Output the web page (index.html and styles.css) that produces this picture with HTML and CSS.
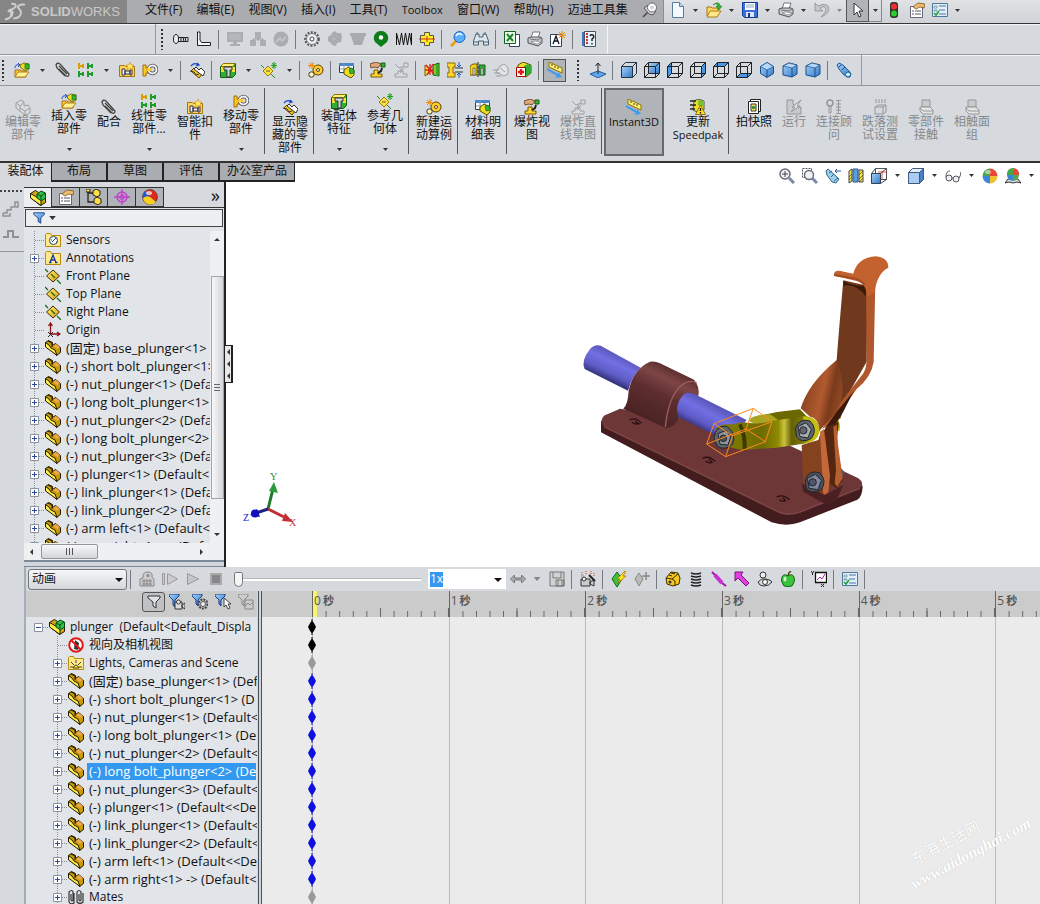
FILE: index.html
```html
<!DOCTYPE html>
<html lang="zh-CN">
<head>
    <meta charset="utf-8">
    <title>SolidWorks</title>
    <link rel="stylesheet" href="styles.css">
</head>
<body>
    <!-- icon sprite -->
    <svg class="sprite" aria-hidden="true">
        <defs>
            <linearGradient id="blue" x1="0" y1="0" x2="1" y2="1"><stop offset="0" stop-color="#a8d2f8"/><stop offset="1" stop-color="#2d78c8"/></linearGradient>
            <linearGradient id="gold" x1="0" y1="0" x2="1" y2="1"><stop offset="0" stop-color="#fff36a"/><stop offset="1" stop-color="#e09a10"/></linearGradient>
        </defs>
        <symbol id="caret" viewBox="0 0 5 3"><path d="M0 0h5L2.500 3z" fill="#333"/></symbol>
        <symbol id="new" viewBox="0 0 16 16"><path d="M2.500.5h7l4 4v11h-11z" fill="#f4f9ff" stroke="#5b7b9c"/><path d="M9.500.5v4h4" fill="#bcd3ea" stroke="#5b7b9c"/></symbol>
        <symbol id="open" viewBox="0 0 16 16"><path d="M1 14V5h4l1 1h6v3" fill="#ffd95e" stroke="#a8720a"/><path d="M1 15l3-6h11l-4 6z" fill="#ffe98c" stroke="#b07c10"/><path d="M7 3q4-3 5 1h-2l3 4 3-4h-2q-1-6-7-1z" fill="#2cb52c" stroke="#177017" stroke-width=".5"/></symbol>
        <symbol id="save" viewBox="0 0 16 16"><path d="M.5 .5h15v15h-13l-2-2z" fill="#3b6fe0" stroke="#153a96"/><path d="M3 1h10v7H3z" fill="#fff"/><path d="M4 3h8M4 5h8" stroke="#8fa5c8"/><path d="M4 10h8v5H4z" fill="#dfe6f2"/><path d="M6 11h2v4H6z" fill="#153a96"/></symbol>
        <symbol id="print" viewBox="0 0 16 16"><path d="M4 7l2-6h7l-2 6" fill="#fff" stroke="#678"/><path d="M1 7l3-1h9l2 1v5l-4 3-10-3z" fill="#c3c8d0" stroke="#555"/><path d="M4 11l6 2 4-2-6-1z" fill="#fff" stroke="#777" stroke-width=".6"/><path d="M3 8l8 1 3-2" stroke="#777" fill="none"/></symbol>
        <symbol id="undo" viewBox="0 0 16 16"><path d="M1 1v8h8L6 6q5-3 6 1 0 4-5 8 8-3 8-9-2-6-11-2z" fill="#c4c6c9" stroke="#8d8f92" stroke-width=".8"/></symbol>
        <symbol id="cursor" viewBox="0 0 16 16"><path d="M4 1v12l3-3 2 5 2-1-2-5h4z" fill="#fff" stroke="#333"/></symbol>
        <symbol id="traffic" viewBox="0 0 16 16"><rect x="4" y="0" width="8" height="16" rx="3" fill="#333"/><circle cx="8" cy="4.500" r="3" fill="#f03030"/><circle cx="8" cy="11.500" r="3" fill="#28d028"/></symbol>
        <symbol id="props" viewBox="0 0 16 16"><path d="M1.500 4.500h12v11h-12z" fill="#fff" stroke="#667"/><path d="M3 9h2M3 12h2M6 9h6M6 12h6" stroke="#556"/><path d="M4 5l5-4 7 1-1 4-4-1-4 2z" fill="#eebc72" stroke="#7e5418" stroke-width=".8"/></symbol>
        <symbol id="options" viewBox="0 0 16 16"><path d="M.5 1.500h15v13H.5z" fill="#e3f0fa" stroke="#4d7897"/><path d="M2 4h3v2H2zM2 8h3v1H2z" fill="#fff" stroke="#57809c" stroke-width=".7"/><path d="M7 4h7M7 8h6M7 12h7" stroke="#4477aa"/><path d="M2 11l2 2 3-4" fill="none" stroke="#1a9a30" stroke-width="1.500"/></symbol>
        <symbol id="pin" viewBox="0 0 16 16"><path d="M1 15l5-5" stroke="#444" stroke-width="1.500"/><path d="M2 6l4-3 8 6-3 4-4-1z" fill="#d4d6d8" stroke="#555"/><circle cx="10" cy="5.500" r="4.500" fill="#fff" stroke="#666"/><circle cx="10" cy="5.500" r="2" fill="#cfd2d5"/></symbol>
        <symbol id="bolt" viewBox="0 0 16 16"><ellipse cx="3" cy="8" rx="2.500" ry="4.500" fill="#eee" stroke="#222"/><path d="M5 6.500h10v4H5M8 6.500v4M10 6l1 5M12 6l1 5" fill="none" stroke="#222"/></symbol>
        <symbol id="angle" viewBox="0 0 16 16"><path d="M1.500 1v13.500h13v-3h-9L4 9V1z" fill="#f6f6f6" stroke="#222"/></symbol>
        <symbol id="monitor" viewBox="0 0 16 16"><path d="M0 1h16v10H0zM6 11h4v2h3v2H3v-2h3z" fill="#aaadb1"/><path d="M2 3h12v6H2z" fill="#b3b6ba"/></symbol>
        <symbol id="blocks" viewBox="0 0 16 16"><path d="M5 1h6v6H5zM0 9h6v6H0zM10 9h6v6h-6z" fill="#abaeb2"/><path d="M8 7v3M3 10V8h10v2" stroke="#999" fill="none"/></symbol>
        <symbol id="disc" viewBox="0 0 16 16"><circle cx="8" cy="8" r="7.500" fill="#a9acb0"/><path d="M3 11l4-4 2 3 4-4" stroke="#c0c3c7" stroke-width="2" fill="none"/></symbol>
        <symbol id="gear" viewBox="0 0 16 16"><circle cx="8" cy="8" r="6.800" fill="#eee" stroke="#555" stroke-width="2" stroke-dasharray="2 1.400"/><circle cx="8" cy="8" r="5.500" fill="#eceef0" stroke="#777"/><circle cx="8" cy="8" r="2" fill="#fff" stroke="#444"/></symbol>
        <symbol id="geargray" viewBox="0 0 16 16"><path d="M5 2l3-2 2 2 4 0 1 4-1 5-4 1-1 3-4-1-1-2-3-2 0-4 3-2z" fill="#a9acb0"/><circle cx="7" cy="8" r="1.500" fill="#b8bbbf"/></symbol>
        <symbol id="cup" viewBox="0 0 16 16"><path d="M0 2h16v3h-1l-3 9H4L1 5H0z" fill="#a7aaae"/></symbol>
        <symbol id="drop" viewBox="0 0 16 16"><path d="M8 16L2 11Q0 8 1 5 3 0 8 0t7 5q1 3-1 6z" fill="#0d7d1a"/><circle cx="8" cy="6.500" r="2.200" fill="#fff"/></symbol>
        <symbol id="spring" viewBox="0 0 16 16"><path d="M.5 14V2l3 12 2-12 2 12 2-12 2 12 2-12 2 12V2" fill="none" stroke="#111"/></symbol>
        <symbol id="cross" viewBox="0 0 16 16"><path d="M5.500 1.500h5v3h4v7h-4v3h-5v-3h-4v-7h4z" fill="#ffee20" stroke="#555"/><path d="M0 8h16M8 5v6" stroke="#d03020"/></symbol>
        <symbol id="magnify" viewBox="0 0 16 16"><path d="M1 15l5-5" stroke="#e8a020" stroke-width="3"/><circle cx="9.500" cy="6" r="5.500" fill="#5db0ff" stroke="#2462b8"/><path d="M6 5q2-4 6-1" stroke="#fff" fill="none" stroke-width="1.500"/></symbol>
        <symbol id="binoc" viewBox="0 0 16 16"><path d="M3 3h3v3h4V3h3l2.500 7v4h-5v-4h-5v4h-5v-4z" fill="#dce6ef" stroke="#4c6070"/><path d="M4 1v3M12 1v3M1 11h4M11 11h4" stroke="#4c6070"/></symbol>
        <symbol id="excel" viewBox="0 0 16 16"><path d="M5.500 3.500h10v12h-10z" fill="#fff" stroke="#345"/><path d="M.5.500h11v12H.5z" fill="#e7f7e7" stroke="#17611f"/><path d="M3 3l6 7M9 3l-6 7" stroke="#17802a" stroke-width="2"/></symbol>
        <symbol id="astar" viewBox="0 0 16 16"><path d="M.5 3.500h11v12H.5z" fill="#fff" stroke="#345"/><path d="M3 13l3-8 3 8M4 10h4" stroke="#112" fill="none" stroke-width="1.300"/><path d="M12 0v8M8 4h8M9 1l6 6M15 1L9 7" stroke="#e88a10"/></symbol>
        <symbol id="help" viewBox="0 0 16 16"><path d="M1 1h3v14H1z" fill="#3a78c0"/><path d="M3.500 .5h11v15h-11z" fill="#e8f2fa" stroke="#456"/><path d="M5 3h2M5 6h2M5 9h2M5 12h2" stroke="#d03030" stroke-width="2"/><path d="M9 5q1-2 3-1 2 2-1 4v2M11 12v1.500" stroke="#222" fill="none" stroke-width="1.500"/></symbol>
        <symbol id="insert" viewBox="0 0 16 16"><path d="M1 15V8h5l1 1h5v6z" fill="#ffc93c" stroke="#a87010"/><path d="M1 15l3-5h11l-4 5z" fill="#fff09a" stroke="#b88410"/><path d="M6 3l4-2 5 1v5l-3 2-5-3z" fill="#f0dc20" stroke="#6a6000" stroke-width=".8"/><path d="M11 2h4v5h-4z" fill="#2fba2f" stroke="#145c14" stroke-width=".6"/><path d="M1 6q0-4 4-3M4 1l2 2-2 2" fill="none" stroke="#1a48c8"/></symbol>
        <symbol id="clip" viewBox="0 0 16 16"><path d="M4 7l7 7q3 1 3-2L5 2Q2 0 1 3l1 3 8 8M4 4l8 8" fill="none" stroke="#444" stroke-width="1.300"/></symbol>
        <symbol id="pattern" viewBox="0 0 16 16"><path d="M1 1v6M1 4h4M5 2v4" stroke="#d8a000" stroke-width="2"/><path d="M10 1v6M10 4h4M14 2v4M1 9v6M1 12h4M5 10v4M10 9v6M10 12h4M14 10v4" stroke="#1c9c28" stroke-width="2"/></symbol>
        <symbol id="smart" viewBox="0 0 16 16"><path d="M.5 3.500h5l1 1h9v10H.5z" fill="#ffd75a" stroke="#a87410"/><path d="M3 7h3v6H3zM6 9h5v3H6zM11 8h2v5h-2z" fill="#eef" stroke="#334"/><path d="M11 0l1 3h3l-2 2 1 3-3-2-3 2 1-3-2-2h3z" fill="#fff06a" stroke="#d88a10" stroke-width=".6"/></symbol>
        <symbol id="move" viewBox="0 0 16 16"><path d="M1 3h3v3h3v5H4v3H1z" fill="#ffc928" stroke="#a46a00"/><circle cx="10.500" cy="7.500" r="4" fill="none" stroke="#444" stroke-width="3.500"/><circle cx="10.500" cy="7.500" r="4" fill="none" stroke="#f4f4fa" stroke-width="2"/><path d="M5 7.500h5" stroke="#ffc928" stroke-width="3"/></symbol>
        <symbol id="showhide" viewBox="0 0 16 16"><path d="M2 9l3-3 8 6-3 4z" fill="#f4c520" stroke="#5a4400"/><path d="M5 7l2-2 3 3 2-2 4 4-2 4z" fill="#fff" stroke="#333"/><path d="M1 9l4 1 2 3 3-1" fill="#f4c520" stroke="#333"/><path d="M2 4q3-4 7-1M8 1l2 2-3 1" fill="none" stroke="#1a48c8" stroke-width="1.300"/></symbol>
        <symbol id="feature" viewBox="0 0 16 16"><path d="M.5 4.500l3-3h12v11l-3 3H.5z" fill="#2dae34" stroke="#165c1a"/><path d="M.5 4.500l3-3h12l-3 3z" fill="#fff07a" stroke="#8a7400"/><path d="M1 5h3v5H1zM12 5h3v5h-3z" fill="#f4e030"/><path d="M4 5h8v3h-2v7H7V8H4z" fill="#d5d8da" stroke="#333"/></symbol>
        <symbol id="refgeo" viewBox="0 0 16 16"><path d="M2 9l5-5 5 5-5 5z" fill="#ffe23c" stroke="#9a7a00"/><path d="M0 3l3 3M10 12l4 4" stroke="#1a8a1a"/><path d="M13 0v7M10 3.500h6M11 1l4 5M15 1l-4 5" stroke="#1fa01f"/><path d="M5 9h4" stroke="#554"/></symbol>
        <symbol id="motion" viewBox="0 0 16 16"><circle cx="10" cy="8" r="5" fill="#ffcc30" stroke="#5a4000"/><circle cx="10" cy="8" r="1.500" fill="#fff" stroke="#5a4000"/><circle cx="3.500" cy="12.500" r="2.700" fill="#fff6b0" stroke="#333"/><path d="M4 0v7M0 3.500h8M1 1l5 5M6 1L1 6" stroke="#f08a10"/></symbol>
        <symbol id="bom" viewBox="0 0 16 16"><path d="M.5 1.500h14v9H.5z" fill="#fff" stroke="#245"/><path d="M0 1h15v3H0z" fill="#4a86cc"/><path d="M5 1v9M10 4v3M1 7h13" stroke="#89a"/><path d="M5 8l4-3 6 3v5l-3 3-7-4z" fill="#f4dc20" stroke="#5c5000"/><path d="M10 7l3-1 2 2v3l-4 1z" fill="#2db52d" stroke="#145c14" stroke-width=".6"/></symbol>
        <symbol id="explode" viewBox="0 0 16 16"><path d="M1 12h3V8h4v4h4v3H1z" fill="#ffd630" stroke="#7a5800"/><path d="M11 1h4v4h-4z" fill="#2db52d" stroke="#145c14"/><path d="M12 6l-1 3-3 2" stroke="#222" fill="none" stroke-width="2"/><path d="M0 2l6-2 5 2-3 4-3-1-4 1z" fill="#e0a878" stroke="#5a3414" stroke-width=".8"/></symbol>
        <symbol id="explodeline" viewBox="0 0 16 16"><path d="M2 12h3V9h5v3h4v3H2z" fill="#ddd" stroke="#666"/><path d="M11 1h4v4h-4zM2 2l4 4 5-2M9 5l-2 5M11 6l-4 5" fill="#ddd" stroke="#666"/></symbol>
        <symbol id="clash" viewBox="0 0 16 16"><path d="M1 3l4 3v5l-4 3z" fill="#ffdc20" stroke="#7a6000"/><path d="M9 3l6-2v13l-6-1z" fill="#8fc820" stroke="#145c14"/><path d="M13 2v12" stroke="#2fae35" stroke-width="2"/><path d="M2 3l8 9M9 2L3 13M1 8h9M6 2v11" stroke="#e02020" stroke-width="1.300"/></symbol>
        <symbol id="clear" viewBox="0 0 16 16"><path d="M0 1h8v4H6v6h2v4H0v-4h2V5H0z" fill="#ffd630" stroke="#8a6400"/><path d="M8 6h8M8 10h8" stroke="#333"/><path d="M12 0v5M12 16v-5M10 3l2 2 2-2M10 13l2-2 2 2" stroke="#1a5ad8" fill="none"/></symbol>
        <symbol id="align" viewBox="0 0 16 16"><path d="M0 4l3-2h4v11H0z" fill="#f5d520" stroke="#6c5400"/><path d="M9 3h6v10H9z" fill="#2fae35" stroke="#145c14"/><path d="M3 6h2v7H3zM11 6h2v7h-2z" fill="#e8e8e8" stroke="#333" stroke-width=".6"/><path d="M8 0v16" stroke="#222" stroke-dasharray="3 1"/></symbol>
        <symbol id="dim" viewBox="0 0 16 16"><path d="M7 4l4-2 4 4v6l-4 2-8-4z" fill="#eee" stroke="#666"/><path d="M0 8h6M1 11h6M3 14h5M7 6l5 4" stroke="#666"/></symbol>
        <symbol id="medic" viewBox="0 0 16 16"><path d="M2 3l5-3 8 3v8l-5 4-8-4z" fill="#f0dc28" stroke="#5a5000"/><path d="M8 4l4-2 3 2v7l-5 3z" fill="#2fae35"/><path d="M.5 5.500h9v9h-9z" fill="#fff" stroke="#a00"/><path d="M5 7v6M2 10h6" stroke="#e01818" stroke-width="2.400"/></symbol>
        <symbol id="instant" viewBox="0 0 16 16"><path d="M2 0l13 6v5L2 5z" fill="#ffee78" stroke="#8a7400"/><path d="M5 2v2M8 4v2M11 5v2" stroke="#554400"/><path d="M0 6l11 6v-2l4 5-7 1 2-2L0 8z" fill="#3c9cf0"/></symbol>
        <symbol id="normal" viewBox="0 0 16 16"><path d="M0 12l8-3 8 3-8 4z" fill="#5fa8ec" stroke="#235c9c"/><path d="M8 12V1M5.500 4L8 1l2.500 3" stroke="#222" fill="none"/></symbol>
        <symbol id="cube" viewBox="0 0 16 16"><path d="M.5 4.500h11v11H.5zM4.500.5h11v11h-11zM.5 4.500l4-4M11.500 4.500l4-4M11.500 15.500l4-4M.5 15.500l4-4" fill="none" stroke="#222"/></symbol>
        <symbol id="cube-front" viewBox="0 0 16 16"><path d="M.5 4.500h11v11H.5z" fill="url(#blue)"/><path d="M.5 4.500h11v11H.5zM.5 4.500l4-4h11v11l-4 4M11.500 4.500l4-4" fill="none" stroke="#234"/></symbol>
        <symbol id="cube-back" viewBox="0 0 16 16"><path d="M4.500.5h11v11h-11z" fill="url(#blue)"/><use href="#cube"/></symbol>
        <symbol id="cube-left" viewBox="0 0 16 16"><path d="M.5 4.500l4-4v11l-4 4z" fill="#4898e4"/><use href="#cube"/></symbol>
        <symbol id="cube-right" viewBox="0 0 16 16"><path d="M11.500 4.500l4-4v11l-4 4z" fill="#4898e4"/><use href="#cube"/></symbol>
        <symbol id="cube-top" viewBox="0 0 16 16"><path d="M.5 4.500l4-4h11l-4 4z" fill="#4898e4"/><use href="#cube"/></symbol>
        <symbol id="cube-bottom" viewBox="0 0 16 16"><path d="M.5 15.500l4-4h11l-4 4z" fill="#4898e4"/><use href="#cube"/></symbol>
        <symbol id="iso" viewBox="0 0 16 16"><path d="M8 .5l6.500 4v7L8 15.500l-6.500-4v-7z" fill="url(#blue)" stroke="#1d4f88"/><path d="M1.500 4.500L8 8l6.500-3.500L8 .5z" fill="#b4d8fa" stroke="#1d4f88" stroke-width=".7"/><path d="M8 8v7" stroke="#1d4f88"/></symbol>
        <symbol id="dimetric" viewBox="0 0 16 16"><path d="M1 4l6-3 8 2v9l-5 3-9-2z" fill="url(#blue)" stroke="#1d4f88"/><path d="M1 4l9 2 5-3-8-2z" fill="#b4d8fa" stroke="#1d4f88" stroke-width=".7"/><path d="M10 6v9" stroke="#1d4f88"/></symbol>
        <symbol id="torch" viewBox="0 0 16 16"><path d="M1 3l2-2 4 2 6 6 2 3-1 3-3 0-4-3-4-5z" fill="url(#blue)" stroke="#1c5b94"/><path d="M3 5l2-2M6 8l3-3" stroke="#184d80"/><circle cx="12" cy="12.500" r="2.500" fill="#c9f0ff" stroke="#1c5b94"/></symbol>
        <symbol id="component" viewBox="0 0 16 16"><path d="M1 4l5-3 3 2v4l4-1 2 3v5l-5 2L1 9z" fill="#ddd" stroke="#666"/><path d="M1 4l4 3v4M5 7l4-4M5 9l5 3 5-3M10 12v4" stroke="#666" fill="none"/></symbol>
        <symbol id="speedpak" viewBox="0 0 16 16"><path d="M4 2l4-2 6 2v9l-5 3-6-3z" fill="#f0dc28" stroke="#554"/><path d="M8 1l6 1v6l-6-2z" fill="#7cc030"/><path d="M0 2h6M0 6h6M0 10h5" stroke="#222" stroke-width="1.300"/><path d="M10.500 6l5 9.500h-10z" fill="#ffe02a" stroke="#7a5a00" stroke-width=".8"/><path d="M10.500 9v3M10.500 13v1.500" stroke="#111" stroke-width="1.300"/></symbol>
        <symbol id="snapshot" viewBox="0 0 16 16"><path d="M4.500.5h10v12h-10z" fill="#fff" stroke="#222"/><path d="M2.500 2.500h10v12h-10z" fill="#fff" stroke="#222"/><path d="M5 5h5v7H5z" fill="#ffe860" stroke="#333"/><circle cx="7.500" cy="8.500" r="1.800" fill="#3a8a3a"/></symbol>
        <symbol id="run" viewBox="0 0 16 16"><path d="M1 1h6v4l3 3h5v7H1z" fill="#bbb" stroke="#555"/><path d="M15 1L6 8l3 0-4 5 9-6-3 0z" fill="#eee" stroke="#555"/></symbol>
        <symbol id="connect" viewBox="0 0 16 16"><circle cx="4" cy="4" r="3" fill="none" stroke="#555" stroke-width="1.500"/><path d="M3 7v7h2V7M10 1.500h5M10 14.500h5M10 5h5M10 8h5M10 11h5M12.500 1v14" stroke="#555" fill="none"/></symbol>
        <symbol id="droptest" viewBox="0 0 16 16"><path d="M3 8l3-2h8v7l-3 2H3zM3 8h8v7M11 8l3-2M4 0v4M7 0v4M10 0v4M13 0v4" fill="none" stroke="#555"/></symbol>
        <symbol id="contact" viewBox="0 0 16 16"><path d="M4 1h8v7H4z" fill="#bbb" stroke="#555"/><path d="M2 8h10l3 3v4H5l-3-3z" fill="#eee" stroke="#555"/><path d="M2 9l3 3h10" fill="none" stroke="#555"/></symbol>
        <symbol id="zoomfit" viewBox="0 0 16 16"><circle cx="6" cy="6" r="5" fill="#eef2f5" stroke="#667" stroke-width="1.400"/><path d="M6 3v6M3 6h6" stroke="#445"/><path d="M10 10l5 5" stroke="#7a88a8" stroke-width="3"/></symbol>
        <symbol id="zoomarea" viewBox="0 0 16 16"><path d="M.5.500h9v9h-9z" fill="none" stroke="#556" stroke-dasharray="2 1"/><circle cx="7" cy="7" r="4.500" fill="#eef2f5" stroke="#667" stroke-width="1.400"/><path d="M10 10l5 5" stroke="#7a88a8" stroke-width="3"/></symbol>
        <symbol id="prevview" viewBox="0 0 16 16"><path d="M1 3l2-2 9 8 2 2-3 4-4-1-5-7z" fill="#9cd0ee" stroke="#35648a"/><path d="M4 5l3-2M6 9l3-3M9 13l4-3" stroke="#35648a"/><path d="M16 3H10M12 1l-2 2 2 2" stroke="#235a9a" fill="none"/></symbol>
        <symbol id="section" viewBox="0 0 16 16"><path d="M1 3l3-2v12l-3 2zM11 2h4v12h-4z" fill="#ffe63a" stroke="#444"/><path d="M5 1h5v13H5z" fill="#5a9ee0" stroke="#285a92"/><path d="M1 9l3-3M1 12l3-3M11 7l4-4M11 11l4-4M11 14l4-4" stroke="#444" stroke-width=".7"/></symbol>
        <symbol id="orient" viewBox="0 0 16 16"><path d="M4.500.5h11v11h-11z" fill="#fff" stroke="#555"/><path d="M.5 5.500h9v10h-9z" fill="url(#blue)" stroke="#345"/><path d="M.5 5.500l4-5M9.500 5.500l6-5M9.500 15.500l6-4" stroke="#345"/><path d="M11 3v8M7 4h9" stroke="#c33" stroke-width=".8"/></symbol>
        <symbol id="style" viewBox="0 0 16 16"><path d="M.5 4.500l4-4h11v11l-4 4H.5z" fill="#dfeeff" stroke="#445a7a"/><path d="M11.500 4.500l4-4v11l-4 4z" fill="#4c80cc" stroke="#445a7a"/><path d="M.5 4.500h11v11H.5z" fill="#a9cdf2" stroke="#445a7a"/></symbol>
        <symbol id="glasses" viewBox="0 0 16 16"><circle cx="4" cy="10" r="3" fill="#eef" stroke="#555"/><circle cx="11" cy="11" r="3" fill="#eef" stroke="#555"/><path d="M1 9q0-6 4-6M7 10h1M14 10q3-5 1-6" stroke="#555" fill="none"/></symbol>
        <symbol id="ball" viewBox="0 0 16 16"><path d="M8 8V.5A7.500 7.500 0 0 0 .5 8z" fill="#48a848"/><path d="M8 8h7.500A7.500 7.500 0 0 0 8 .5z" fill="#e84838"/><path d="M8 8H.5A7.500 7.500 0 0 0 8 15.500z" fill="#3c86d8"/><path d="M8 8v7.500A7.500 7.500 0 0 0 15.500 8z" fill="#f0c030"/><ellipse cx="6" cy="4" rx="3" ry="2" fill="#fff" opacity=".5"/></symbol>
        <symbol id="scene" viewBox="0 0 16 16"><path d="M0 15l3-4h10l3 4-4-1-4 1-4-1z" fill="#ddd" stroke="#333"/><path d="M8 7V0a6 6 0 0 0-6 7z" fill="#48a848"/><path d="M8 7h6A6 6 0 0 0 8 0z" fill="#e84838"/><path d="M8 7H2a6 6 0 0 0 6 6z" fill="#3c86d8"/><path d="M8 7v6a6 6 0 0 0 6-6z" fill="#50a850"/></symbol>
        <symbol id="ball2" viewBox="0 0 16 16"><circle cx="8" cy="8" r="7.500" fill="#e02818" stroke="#333" stroke-width=".6"/><path d="M3 2q2 1 5 6l6 5A7.500 7.500 0 0 1 8 15.500Q4 11 1 10 0 5 3 2z" fill="#2858c8"/><path d="M1 9q4-3 7-1l6 5A7.500 7.500 0 0 1 1 9z" fill="#f8d020"/><ellipse cx="7" cy="4" rx="3" ry="2" fill="#fff" opacity=".7"/></symbol>
        <symbol id="config" viewBox="0 0 16 16"><path d="M2 1v12h6M2 4h6" stroke="#222" fill="none" stroke-width="1.300"/><path d="M7 2l3-2 4 2v4l-3 2-4-2zM8 10l3-2 4 2v4l-3 2-4-2zM0 0h4v3H0z" fill="#ffe040" stroke="#222"/></symbol>
        <symbol id="target" viewBox="0 0 16 16"><circle cx="8" cy="8" r="5" fill="none" stroke="#c040d0" stroke-width="1.500"/><path d="M8 0v16M0 8h16" stroke="#c040d0" stroke-width="1.300"/><path d="M6 6h4v4H6z" fill="none" stroke="#c040d0"/></symbol>
        <symbol id="funnel" viewBox="0 0 16 16"><path d="M2 2h12v2l-4 4v6l-3-2V8L2 4z" fill="url(#blue)" stroke="#173f8c"/></symbol>
        <symbol id="part" viewBox="0 0 16 16"><path d="M.5 2.500l3-2 4 2v3l3-2 5 4v5l-4 3z" fill="#c99a08" stroke="#221a00"/><path d="M.5 2.500L4 5l2 3 4 2 2 5.500L.5 7z" fill="#ffec4a" stroke="#221a00"/><path d="M8 6l3-2 4 3-3 2z" fill="#f0a848"/><path d="M3 1l4 2v4" fill="none" stroke="#221a00"/></symbol>
        <symbol id="asm" viewBox="0 0 16 16"><path d="M.5 3.500l5-3 3 2 7 2v8l-5 3-10-8z" fill="#d2a810" stroke="#221a00"/><path d="M.5 3.500L5 6l6 4v5.500L.5 8z" fill="#ffec4a" stroke="#221a00"/><path d="M7 4l4-3 4.500 2v5l-4 3L7 8z" fill="#32c04a" stroke="#0b4a16"/><path d="M7 4l4 2v4M11 6l4-3" stroke="#0b4a16" fill="none"/></symbol>
        <symbol id="folder" viewBox="0 0 16 16"><path d="M.5 2.500l1-1h4l1 2h9v11H.5z" fill="#ffe98a" stroke="#b88a10"/></symbol>
        <symbol id="sensors" viewBox="0 0 16 16"><use href="#folder"/><circle cx="8.500" cy="8.500" r="4" fill="#fff" stroke="#246"/><path d="M7 10l4-4M6 8l1 0M11 10l1 0" stroke="#246"/></symbol>
        <symbol id="notes" viewBox="0 0 16 16"><use href="#folder"/><path d="M5 12.500L8 5l3 7.500M6 10h4M4 12.500h2.500M10 12.500h2.500" stroke="#1838a8" fill="none" stroke-width="1.300"/></symbol>
        <symbol id="lights" viewBox="0 0 16 16"><use href="#folder"/><path d="M5 13q3-6 6 0zM8 5v3M3 7l3 3M13 7l-3 3M2 12h3M11 12h3" fill="#ffe020" stroke="#442"/></symbol>
        <symbol id="plane" viewBox="0 0 16 16"><path d="M1.500 8l6.500-6 6.500 6L8 14z" fill="url(#gold)" stroke="#3c2c00"/><path d="M0 1l3 3M12 12l4 4M6 6l4 4" stroke="#1a6a1a" stroke-width="1.300"/></symbol>
        <symbol id="origin" viewBox="0 0 16 16"><path d="M5.500 1v11H15M3.500 4l2-3 2 3M12 10l3 2-3 2" stroke="#8a1018" fill="none" stroke-width="1.300"/><path d="M3 10l5 5M8 10l-5 5" stroke="#222"/></symbol>
        <symbol id="nocamera" viewBox="0 0 16 16"><circle cx="8" cy="8" r="6.800" fill="#fff" stroke="#e01818" stroke-width="2"/><path d="M7 3l4 3-1 7-4-1z" fill="#333"/><path d="M3 3l10 10" stroke="#e01818" stroke-width="2"/></symbol>
        <symbol id="mates" viewBox="0 0 16 16"><path d="M3 5v6q1 2 2 0V3Q4 0 1 3v10q2 3 5 1V4M11 5v6q1 2 2 0V3q-2-3-4 0v10q3 3 6 0V4" fill="none" stroke="#333" stroke-width="1.200"/></symbol>
        <symbol id="twig" viewBox="0 0 18 18"><path d="M8.500 0v18M9 9.500h9" stroke="#8a8f98" stroke-dasharray="1 1"/></symbol>
        <symbol id="twig-plus" viewBox="0 0 18 18"><use href="#twig"/><path d="M4.500 5.500h8v8h-8z" fill="#fff" stroke="#8b949f"/><path d="M6 9.500h5M8.500 7v5" stroke="#2c4a9c"/></symbol>
        <symbol id="twig-minus" viewBox="0 0 18 18"><path d="M9 9.500h9" stroke="#8a8f98" stroke-dasharray="1 1"/><path d="M4.500 5.500h8v8h-8z" fill="#fff" stroke="#8b949f"/><path d="M6 9.500h5" stroke="#2c4a9c"/></symbol>
        <symbol id="calc" viewBox="0 0 16 16"><path d="M4 5q0-4 5-4t4 5l2 2v7H1V8l3-1z" fill="#ccc" stroke="#888"/><path d="M3 10h10M3 13h10M5 8v7M8 8v7M11 8v7" stroke="#888"/><circle cx="9" cy="4.500" r="1.500" fill="#888"/></symbol>
        <symbol id="playstart" viewBox="0 0 16 16"><path d="M.5 2.500h2v11h-2zM5.500 2.500l10 5.500-10 5.500z" fill="#ccc" stroke="#999"/></symbol>
        <symbol id="play" viewBox="0 0 16 16"><path d="M2.500 2.500l11 5.500-11 5.500z" fill="#c4c6c8" stroke="#999"/></symbol>
        <symbol id="stop" viewBox="0 0 16 16"><path d="M3 3h10v10H3z" fill="#888" stroke="#aaa" stroke-width="2"/></symbol>
        <symbol id="loop" viewBox="0 0 16 16"><path d="M.5 8l4-4v3h7V4l4 4-4 4V9h-7v3z" fill="#aaa" stroke="#777"/></symbol>
        <symbol id="savefilm" viewBox="0 0 16 16"><path d="M1 1h14v14H1z" fill="#d0d2d4" stroke="#777"/><path d="M4 1v6h8V1M7 9h8v6H7zM9 9v6M13 9v6" stroke="#777" fill="none"/></symbol>
        <symbol id="wizard" viewBox="0 0 16 16"><path d="M1 8h9v7H1zM10 11l4-2v6l-4-2z" fill="#ccc" stroke="#333"/><circle cx="4" cy="8" r="2" fill="#eee" stroke="#333"/><path d="M9 4l6 6" stroke="#222" stroke-width="2"/><path d="M2 1v3M6 0v3M11 0v3M14 2v3M1 5h3" stroke="#d83818" stroke-dasharray="1 1"/></symbol>
        <symbol id="autokey" viewBox="0 0 16 16"><path d="M6 1l5 7-5 8-5-8z" fill="#3ec040" stroke="#0f6a1a"/><path d="M14 0L6 8h3l-3 5 9-8h-3l3-5z" fill="#ffe620" stroke="#a86a00" stroke-width=".7"/></symbol>
        <symbol id="addkey" viewBox="0 0 16 16"><path d="M5 2l4 6-4 7-4-7z" fill="#bbb" stroke="#888"/><path d="M12 1v8M8 5h8" stroke="#888" stroke-width="1.500"/></symbol>
        <symbol id="motor" viewBox="0 0 16 16"><path d="M1 7l5-6 7 1 2 5-1 6-6 2-6-2z" fill="#f4c820" stroke="#3a2c00"/><path d="M1 7l6 1 3 2v5M7 8l6-5M4 4l3 1M6 2l4 1" fill="none" stroke="#3a2c00"/><circle cx="5" cy="11" r="1.500" fill="#333"/></symbol>
        <symbol id="coil" viewBox="0 0 16 16"><path d="M3 2q5 2 10 0M3 5q5 2 10 0M3 8q5 2 10 0M3 11q5 2 10 0M3 14q5 2 10 0" fill="none" stroke="#222" stroke-width="1.600"/></symbol>
        <symbol id="damper" viewBox="0 0 16 16"><path d="M1 1l4 4" stroke="#a018a8" stroke-width="2"/><path d="M4 4l7 8" stroke="#c830d0" stroke-width="4"/><path d="M11 12l4 3" stroke="#a018a8" stroke-width="2"/></symbol>
        <symbol id="force" viewBox="0 0 16 16"><path d="M1 1h8L7 4l8 8-3 3-8-8-3 3z" fill="#e040e0" stroke="#7a107a"/></symbol>
        <symbol id="touch" viewBox="0 0 16 16"><circle cx="6" cy="4" r="3" fill="#eee" stroke="#333"/><path d="M1 11q3-4 8-3t6 3q-3 4-8 4t-6-4z" fill="#ddd" stroke="#333"/><circle cx="8" cy="11" r="2.500" fill="#fff" stroke="#333"/></symbol>
        <symbol id="apple" viewBox="0 0 16 16"><path d="M8 5q4-3 6 1t-2 9q-4 1-8 0-4-5-2-9t6-1z" fill="#3cc23c" stroke="#136a1a"/><path d="M8 5q0-3 3-5" stroke="#5a3a10" stroke-width="1.500" fill="none"/><ellipse cx="5" cy="8" rx="1.500" ry="2.500" fill="#c8f8c0"/></symbol>
        <symbol id="plot" viewBox="0 0 16 16"><path d="M4.500 1.500h11v10h-11z" fill="#fff" stroke="#111" stroke-width="1.300"/><path d="M6 9l3-3 2 2 3-5" stroke="#b020b0" fill="none"/><path d="M0 0l1.500 2L3 0M1.500 2v2M10 13l3 3M13 13l-3 3" stroke="#222" fill="none"/></symbol>
        <symbol id="f-plain" viewBox="0 0 16 16"><path d="M2 2h12v2l-4 4v6l-3-2V8L2 4z" fill="#dfe2e5" stroke="#333"/></symbol>
        <symbol id="f-anim" viewBox="0 0 16 16"><path d="M0 0h10v2L6 6v7l-2-2V6L0 2z" fill="url(#blue)" stroke="#173f8c"/><path d="M6 8h7v7H6zM13 11l3-2v6l-3-2z" fill="#ddd" stroke="#333"/><circle cx="9.500" cy="8" r="2" fill="#eee" stroke="#333"/></symbol>
        <symbol id="f-drive" viewBox="0 0 16 16"><circle cx="11" cy="10" r="4.500" fill="#ccc" stroke="#444" stroke-width="2" stroke-dasharray="2 1"/><circle cx="11" cy="10" r="2.500" fill="#eee" stroke="#555"/><path d="M0 0h10v2L6 6v6l-2-2V6L0 2z" fill="url(#blue)" stroke="#173f8c"/></symbol>
        <symbol id="f-sel" viewBox="0 0 16 16"><path d="M0 0h10v2L6 6v6l-2-2V6L0 2z" fill="url(#blue)" stroke="#173f8c"/><path d="M9 4v9l2-2 2 4 2-1-2-4h3z" fill="#fff" stroke="#333" stroke-width=".9"/></symbol>
        <symbol id="f-res" viewBox="0 0 16 16"><path d="M0 0h10v2L6 6v6l-2-2V6L0 2z" fill="#ccc" stroke="#888"/><path d="M7 6h8v9H7zM7 12l3-3 2 2 3-3" fill="#ccc" stroke="#888"/></symbol>
        <symbol id="key" viewBox="0 0 8 16"><path d="M3.500 0h1v2l2 3L8 8l-1.500 3-2 3v2h-1v-2l-2-3L0 8l1.500-3 2-3z" fill="currentColor"/></symbol>
        <symbol id="jog" viewBox="0 0 18 18"><path d="M1 13h4v-3h4V7h4V2h3v5h-2M1 13v3h7v-3" fill="none" stroke="#8d9196" stroke-width="1.500"/></symbol>
        <symbol id="step" viewBox="0 0 18 18"><path d="M1 12h5V6h5v6h6" fill="none" stroke="#8d9196" stroke-width="2"/></symbol>
    </svg>

    <header class="menubar">
        <div class="logo">
            <svg viewBox="0 0 24 20"><path d="M8 1q7 0 4 4-3 3-7 3 6 0 4 5-2 4-8 5M23 2q-7-1-8 3 5 4 3 8-2 4-8 4M4 9q6 0 3 5" fill="none" stroke="#cfcfcf" stroke-width="2"/></svg>
            <span><b>SOLID</b>WORKS</span>
        </div>
        <nav class="menus">
            <a href="#">文件(F)</a>
            <a href="#">编辑(E)</a>
            <a href="#">视图(V)</a>
            <a href="#">插入(I)</a>
            <a href="#">工具(T)</a>
            <a href="#" class="latin">Toolbox</a>
            <a href="#">窗口(W)</a>
            <a href="#">帮助(H)</a>
            <a href="#">迈迪工具集</a>
            <svg class="icon"><use href="#pin"/></svg>
        </nav>
        <div class="quick">
            <button aria-label="新建"><svg class="icon"><use href="#new"/></svg></button><button class="drop" aria-label="更多"><svg><use href="#caret"/></svg></button>
            <button aria-label="打开"><svg class="icon"><use href="#open"/></svg></button><button class="drop" aria-label="更多"><svg><use href="#caret"/></svg></button>
            <button aria-label="保存"><svg class="icon"><use href="#save"/></svg></button><button class="drop" aria-label="更多"><svg><use href="#caret"/></svg></button>
            <button aria-label="打印"><svg class="icon"><use href="#print"/></svg></button><button class="drop" aria-label="更多"><svg><use href="#caret"/></svg></button>
            <button aria-label="撤消"><svg class="icon"><use href="#undo"/></svg></button><button class="drop off" aria-label="更多"><svg><use href="#caret"/></svg></button>
            <button class="pressed" aria-label="选择"><svg class="icon"><use href="#cursor"/></svg></button><button class="drop framed" aria-label="更多"><svg><use href="#caret"/></svg></button>
            <button aria-label="重建模型"><svg class="icon"><use href="#traffic"/></svg></button>
            <button aria-label="文件属性"><svg class="icon"><use href="#props"/></svg></button>
            <button aria-label="选项"><svg class="icon"><use href="#options"/></svg></button><button class="drop" aria-label="更多"><svg><use href="#caret"/></svg></button>
        </div>
    </header>

    <div class="toolrow">
        <div class="blank"></div>
        <div class="toolbar">
            <i class="grip"></i>
            <button aria-label="螺栓"><svg class="icon"><use href="#bolt"/></svg></button>
            <button aria-label="型材"><svg class="icon"><use href="#angle"/></svg></button>
            <i class="sep"></i>
            <button aria-label="显示"><svg class="icon"><use href="#monitor"/></svg></button>
            <button aria-label="结构"><svg class="icon"><use href="#blocks"/></svg></button>
            <button aria-label="圆盘"><svg class="icon"><use href="#disc"/></svg></button>
            <i class="sep"></i>
            <button aria-label="齿轮"><svg class="icon"><use href="#gear"/></svg></button>
            <button aria-label="链轮"><svg class="icon"><use href="#geargray"/></svg></button>
            <button aria-label="带轮"><svg class="icon"><use href="#cup"/></svg></button>
            <button aria-label="凸轮"><svg class="icon"><use href="#drop"/></svg></button>
            <button aria-label="弹簧"><svg class="icon"><use href="#spring"/></svg></button>
            <button aria-label="联轴器"><svg class="icon"><use href="#cross"/></svg></button>
            <i class="sep"></i>
            <button aria-label="搜索"><svg class="icon"><use href="#magnify"/></svg></button>
            <button aria-label="查找"><svg class="icon"><use href="#binoc"/></svg></button>
            <i class="sep"></i>
            <button aria-label="表格"><svg class="icon"><use href="#excel"/></svg></button>
            <button aria-label="批量打印"><svg class="icon"><use href="#print"/></svg></button>
            <button aria-label="文字"><svg class="icon"><use href="#astar"/></svg></button>
            <i class="sep"></i>
            <button aria-label="帮助"><svg class="icon"><use href="#help"/></svg></button>
        </div>
    </div>

    <div class="toolrow">
        <div class="toolbar wide">
            <i class="grip"></i>
            <button aria-label="插入零部件"><svg class="icon"><use href="#insert"/></svg></button><button class="drop" aria-label="更多"><svg><use href="#caret"/></svg></button>
            <button aria-label="配合"><svg class="icon"><use href="#clip"/></svg></button>
            <button aria-label="线性零部件阵列"><svg class="icon"><use href="#pattern"/></svg></button><button class="drop" aria-label="更多"><svg><use href="#caret"/></svg></button>
            <button aria-label="智能扣件"><svg class="icon"><use href="#smart"/></svg></button>
            <button aria-label="移动零部件"><svg class="icon"><use href="#move"/></svg></button><button class="drop" aria-label="更多"><svg><use href="#caret"/></svg></button>
            <i class="sep"></i>
            <button aria-label="显示隐藏的零部件"><svg class="icon"><use href="#showhide"/></svg></button>
            <i class="sep"></i>
            <button aria-label="装配体特征"><svg class="icon"><use href="#feature"/></svg></button><button class="drop" aria-label="更多"><svg><use href="#caret"/></svg></button>
            <button aria-label="参考几何体"><svg class="icon"><use href="#refgeo"/></svg></button><button class="drop" aria-label="更多"><svg><use href="#caret"/></svg></button>
            <i class="sep"></i>
            <button aria-label="新建运动算例"><svg class="icon"><use href="#motion"/></svg></button>
            <i class="sep"></i>
            <button aria-label="材料明细表"><svg class="icon"><use href="#bom"/></svg></button>
            <i class="sep"></i>
            <button aria-label="爆炸视图"><svg class="icon"><use href="#explode"/></svg></button>
            <button class="off" aria-label="爆炸直线草图"><svg class="icon"><use href="#explodeline"/></svg></button>
            <i class="sep"></i>
            <button aria-label="干涉检查"><svg class="icon"><use href="#clash"/></svg></button>
            <button aria-label="间隙验证"><svg class="icon"><use href="#clear"/></svg></button>
            <button aria-label="孔对齐"><svg class="icon"><use href="#align"/></svg></button>
            <button class="off" aria-label="测量"><svg class="icon"><use href="#dim"/></svg></button>
            <button aria-label="诊断"><svg class="icon"><use href="#medic"/></svg></button>
            <i class="sep"></i>
            <button class="pressed" aria-label="Instant3D"><svg class="icon"><use href="#instant"/></svg></button>
            <i class="grip second"></i>
            <button aria-label="正视于"><svg class="icon"><use href="#normal"/></svg></button>
            <i class="sep"></i>
            <button aria-label="前视"><svg class="icon"><use href="#cube-front"/></svg></button>
            <button aria-label="后视"><svg class="icon"><use href="#cube-back"/></svg></button>
            <button aria-label="左视"><svg class="icon"><use href="#cube-left"/></svg></button>
            <button aria-label="右视"><svg class="icon"><use href="#cube-right"/></svg></button>
            <button aria-label="上视"><svg class="icon"><use href="#cube-top"/></svg></button>
            <button aria-label="下视"><svg class="icon"><use href="#cube-bottom"/></svg></button>
            <button aria-label="等轴测"><svg class="icon"><use href="#iso"/></svg></button>
            <button aria-label="左右二等角"><svg class="icon"><use href="#dimetric"/></svg></button>
            <button aria-label="上下二等角"><svg class="icon"><use href="#dimetric"/></svg></button>
            <i class="sep"></i>
            <button aria-label="视图选择"><svg class="icon"><use href="#torch"/></svg></button>
        </div>
    </div>

    <div class="ribbon">
        <button class="cmd off"><svg class="icon"><use href="#component"/></svg>编辑零部件</button>
        <button class="cmd menu"><svg class="icon"><use href="#insert"/></svg>插入零部件<svg class="caret"><use href="#caret"/></svg></button>
        <button class="cmd narrow"><svg class="icon"><use href="#clip"/></svg>配合</button>
        <button class="cmd menu"><svg class="icon"><use href="#pattern"/></svg>线性零部件...<svg class="caret"><use href="#caret"/></svg></button>
        <button class="cmd"><svg class="icon"><use href="#smart"/></svg>智能扣件</button>
        <button class="cmd menu"><svg class="icon"><use href="#move"/></svg>移动零部件<svg class="caret"><use href="#caret"/></svg></button>
        <i class="rule"></i>
        <button class="cmd"><svg class="icon"><use href="#showhide"/></svg>显示隐藏的零部件</button>
        <i class="rule"></i>
        <button class="cmd menu"><svg class="icon"><use href="#feature"/></svg>装配体特征<svg class="caret"><use href="#caret"/></svg></button>
        <button class="cmd menu"><svg class="icon"><use href="#refgeo"/></svg>参考几何体<svg class="caret"><use href="#caret"/></svg></button>
        <i class="rule"></i>
        <button class="cmd"><svg class="icon"><use href="#motion"/></svg>新建运动算例</button>
        <i class="rule"></i>
        <button class="cmd"><svg class="icon"><use href="#bom"/></svg>材料明细表</button>
        <i class="rule"></i>
        <button class="cmd"><svg class="icon"><use href="#explode"/></svg>爆炸视图</button>
        <button class="cmd off"><svg class="icon"><use href="#explodeline"/></svg>爆炸直线草图</button>
        <i class="rule"></i>
        <button class="cmd broad pressed"><svg class="icon"><use href="#instant"/></svg><span class="latin">Instant3D</span></button>
        <button class="cmd speed"><svg class="icon"><use href="#speedpak"/></svg>更新<span class="latin">Speedpak</span></button>
        <i class="rule"></i>
        <button class="cmd"><svg class="icon"><use href="#snapshot"/></svg>拍快照</button>
        <button class="cmd narrow off"><svg class="icon"><use href="#run"/></svg>运行</button>
        <button class="cmd off"><svg class="icon"><use href="#connect"/></svg>连接顾问</button>
        <button class="cmd off"><svg class="icon"><use href="#droptest"/></svg>跌落测试设置</button>
        <button class="cmd off"><svg class="icon"><use href="#contact"/></svg>零部件接触</button>
        <button class="cmd off"><svg class="icon"><use href="#contact"/></svg>相触面组</button>
    </div>

    <div class="tabrow">
        <nav class="tabs">
            <a href="#" class="active">装配体</a>
            <a href="#">布局</a>
            <a href="#">草图</a>
            <a href="#">评估</a>
            <a href="#" class="long">办公室产品</a>
        </nav>
        <div class="viewbar">
            <button aria-label="整屏显示"><svg class="icon"><use href="#zoomfit"/></svg></button>
            <button aria-label="局部放大"><svg class="icon"><use href="#zoomarea"/></svg></button>
            <button aria-label="上一视图"><svg class="icon"><use href="#prevview"/></svg></button>
            <button aria-label="剖面视图"><svg class="icon"><use href="#section"/></svg></button>
            <button aria-label="视图定向"><svg class="icon"><use href="#orient"/></svg></button><button class="drop" aria-label="更多"><svg><use href="#caret"/></svg></button>
            <button aria-label="显示样式"><svg class="icon"><use href="#style"/></svg></button><button class="drop" aria-label="更多"><svg><use href="#caret"/></svg></button>
            <button aria-label="隐藏/显示项目"><svg class="icon"><use href="#glasses"/></svg></button><button class="drop" aria-label="更多"><svg><use href="#caret"/></svg></button>
            <button aria-label="编辑外观"><svg class="icon"><use href="#ball"/></svg></button>
            <button aria-label="应用布景"><svg class="icon"><use href="#scene"/></svg></button><button class="drop" aria-label="更多"><svg><use href="#caret"/></svg></button>
        </div>
    </div>

    <main class="work">
        <aside class="gutter">
            <div class="gutter-tools">
                <svg><use href="#jog"/></svg>
                <svg><use href="#step"/></svg>
            </div>
        </aside>

        <div class="right">
            <div class="upper">
                <section class="panel">
                    <div class="panel-tabs">
                        <button class="active" aria-label="设计树"><svg class="icon"><use href="#asm"/></svg></button>
                        <button aria-label="属性"><svg class="icon"><use href="#props"/></svg></button>
                        <button aria-label="配置"><svg class="icon"><use href="#config"/></svg></button>
                        <button aria-label="尺寸专家"><svg class="icon"><use href="#target"/></svg></button>
                        <button aria-label="外观"><svg class="icon"><use href="#ball2"/></svg></button>
                        <span class="more">»</span>
                    </div>
                    <div class="filter"><svg class="icon"><use href="#funnel"/></svg><svg class="caret"><use href="#caret"/></svg></div>
                    <div class="tree-area">
                        <ul class="tree">
                            <li><svg class="twig"><use href="#twig"/></svg><svg class="icon"><use href="#sensors"/></svg><span>Sensors</span></li>
                            <li><svg class="twig"><use href="#twig-plus"/></svg><svg class="icon"><use href="#notes"/></svg><span>Annotations</span></li>
                            <li><svg class="twig"><use href="#twig"/></svg><svg class="icon"><use href="#plane"/></svg><span>Front Plane</span></li>
                            <li><svg class="twig"><use href="#twig"/></svg><svg class="icon"><use href="#plane"/></svg><span>Top Plane</span></li>
                            <li><svg class="twig"><use href="#twig"/></svg><svg class="icon"><use href="#plane"/></svg><span>Right Plane</span></li>
                            <li><svg class="twig"><use href="#twig"/></svg><svg class="icon"><use href="#origin"/></svg><span>Origin</span></li>
                            <li class="part"><svg class="twig"><use href="#twig-plus"/></svg><svg class="icon"><use href="#part"/></svg><span>(固定) base_plunger&lt;1&gt;</span></li>
                            <li class="part"><svg class="twig"><use href="#twig-plus"/></svg><svg class="icon"><use href="#part"/></svg><span>(-) short bolt_plunger&lt;1&gt;</span></li>
                            <li class="part"><svg class="twig"><use href="#twig-plus"/></svg><svg class="icon"><use href="#part"/></svg><span>(-) nut_plunger&lt;1&gt; (Defa</span></li>
                            <li class="part"><svg class="twig"><use href="#twig-plus"/></svg><svg class="icon"><use href="#part"/></svg><span>(-) long bolt_plunger&lt;1&gt;</span></li>
                            <li class="part"><svg class="twig"><use href="#twig-plus"/></svg><svg class="icon"><use href="#part"/></svg><span>(-) nut_plunger&lt;2&gt; (Defa</span></li>
                            <li class="part"><svg class="twig"><use href="#twig-plus"/></svg><svg class="icon"><use href="#part"/></svg><span>(-) long bolt_plunger&lt;2&gt;</span></li>
                            <li class="part"><svg class="twig"><use href="#twig-plus"/></svg><svg class="icon"><use href="#part"/></svg><span>(-) nut_plunger&lt;3&gt; (Defa</span></li>
                            <li class="part"><svg class="twig"><use href="#twig-plus"/></svg><svg class="icon"><use href="#part"/></svg><span>(-) plunger&lt;1&gt; (Default&lt;</span></li>
                            <li class="part"><svg class="twig"><use href="#twig-plus"/></svg><svg class="icon"><use href="#part"/></svg><span>(-) link_plunger&lt;1&gt; (Defa</span></li>
                            <li class="part"><svg class="twig"><use href="#twig-plus"/></svg><svg class="icon"><use href="#part"/></svg><span>(-) link_plunger&lt;2&gt; (Defa</span></li>
                            <li class="part"><svg class="twig"><use href="#twig-plus"/></svg><svg class="icon"><use href="#part"/></svg><span>(-) arm left&lt;1&gt; (Default&lt;</span></li>
                            <li class="part"><svg class="twig"><use href="#twig-plus"/></svg><svg class="icon"><use href="#part"/></svg><span>(-) arm right&lt;1&gt; -&gt; (Def</span></li>
                        </ul>
                        <div class="vscroll"><i class="up"></i><div class="thumb"></div><i class="down"></i></div>
                    </div>
                    <div class="hscroll"><i class="left-arrow"></i><div class="thumb"></div><i class="right-arrow"></i></div>
                    <div class="panel-foot"></div>
                </section>

                <section class="viewport">
                    <button class="collapse" aria-label="折叠"><i></i><i></i><i></i></button>
                    <svg class="triad" viewBox="0 0 56 60">
                        <path d="M26 37L31 17" stroke="#1a7a2a" stroke-width="3"/><path d="M27 19l5-9 4 11z" fill="#2a9a3a"/>
                        <path d="M26 37l16 8" stroke="#c03038" stroke-width="3"/><path d="M40 49l3-8 8 9z" fill="#c83038"/>
                        <path d="M26 37l-12 4" stroke="#202080" stroke-width="3"/><path d="M8 43l7-6 3 8z" fill="#1010c0"/><circle cx="13" cy="41.500" r="4" fill="#1010c0"/>
                        <text x="28" y="8" fill="#2a8a3a">Y</text><text x="1" y="49" fill="#2020c0">Z</text><text x="47" y="54" fill="#c83038">X</text>
                    </svg>
                    <svg class="model" viewBox="0 0 1020 870">
                        <defs>
                            <linearGradient id="rod" gradientUnits="userSpaceOnUse" x1="150" y1="325" x2="110" y2="410"><stop offset="0" stop-color="#5552b4"/><stop offset=".35" stop-color="#7270e2"/><stop offset=".7" stop-color="#5f5cc8"/><stop offset="1" stop-color="#2a2868"/></linearGradient>
                            <linearGradient id="rod2" gradientUnits="userSpaceOnUse" x1="435" y1="475" x2="390" y2="560"><stop offset="0" stop-color="#5552b4"/><stop offset=".35" stop-color="#7270e2"/><stop offset=".7" stop-color="#5f5cc8"/><stop offset="1" stop-color="#2a2868"/></linearGradient>
                            <linearGradient id="boss" gradientUnits="userSpaceOnUse" x1="310" y1="370" x2="230" y2="530"><stop offset="0" stop-color="#5a2c2d"/><stop offset=".2" stop-color="#7e4546"/><stop offset=".5" stop-color="#5c2d2e"/><stop offset="1" stop-color="#4a2223"/></linearGradient>
                            <linearGradient id="arm" gradientUnits="userSpaceOnUse" x1="700" y1="440" x2="840" y2="470"><stop offset="0" stop-color="#8c4522"/><stop offset=".4" stop-color="#b05a2e"/><stop offset=".6" stop-color="#7a3b1c"/><stop offset="1" stop-color="#a4552c"/></linearGradient>
                            <linearGradient id="link" gradientUnits="userSpaceOnUse" x1="500" y1="0" x2="750" y2="0"><stop offset="0" stop-color="#7d7804"/><stop offset=".3" stop-color="#6f6a04"/><stop offset=".5" stop-color="#8f8a00"/><stop offset=".57" stop-color="#cac440"/><stop offset=".66" stop-color="#656004"/><stop offset="1" stop-color="#a8a208"/></linearGradient>
                        </defs>
                        <path d="M93 528V562L605 832Q650 846 690 832L862 764Q877 755 878 722L600 600z" fill="#421c1e"/>
                        <path d="M95 525Q98 512 112 508L150 491 L420 530 660 602 865 700Q885 715 870 730L690 801Q650 815 618 797L103 545Q93 535 95 525z" fill="#6d3637"/>
                        <path d="M103 545L618 797Q650 815 690 801L870 730" fill="none" stroke="#7c4445" stroke-width="5"/>
                        <path d="M60 312Q74 297 92 302L212 368Q185 395 174 437L44 372Q32 348 60 312z" fill="url(#rod)"/>
                        <path d="M160 491Q174 478 176 437Q190 372 240 350Q255 347 270 355L372 404Q388 422 386 450L330 500Q325 545 288 549z" fill="url(#boss)"/>
                        <path d="M286 546Q296 450 336 420Q360 402 380 414" fill="none" stroke="#9a6060" stroke-width="4"/>
                        <path d="M345 445Q360 440 375 448L530 525 500 560 440 574 325 516Q312 475 345 445z" fill="url(#rod2)"/>
                        <path d="M540 520Q610 500 690 493L712 516 600 535z" fill="#6c6800"/>
                        <path d="M536 528Q550 508 600 508L625 525 570 545z" fill="#aaa520"/>
                        <path d="M436 552Q450 535 485 538L520 532Q570 540 605 528L700 514Q745 515 748 556Q745 592 700 596L620 608 515 615 452 600z" fill="url(#link)"/>
                        <path d="M700 514Q745 515 748 556Q745 592 700 596Q738 580 734 556Q730 530 700 524z" fill="#c4be10"/>
                        <path d="M505 540Q520 575 518 612L530 612Q532 570 515 536z" fill="#3c3a00"/>
                        <path d="M800 520q14 16 8 38l-12-2z" fill="#b0aa10"/>
                        <path d="M820 106L892 122 890 350 845 430 800 505 730 480 800 345Q808 240 820 106z" fill="#70381c"/>
                        <path d="M820 108Q850 125 886 122L888 155Q860 115 820 122z" fill="#3a1a0a"/>
                        <path d="M888 110L916 112 911 350Q905 395 860 432L820 490 812 520 756 552 790 500 880 385Q890 370 890 340z" fill="#b0582d"/>
                        <path d="M850 440L820 500 790 550 765 550 800 500z" fill="#3a1a0c"/>
                        <path d="M792 92Q790 76 808 77L850 86Q862 38 918 34Q955 38 955 68Q922 84 914 140L892 155Q890 112 850 106z" fill="#c4622f"/>
                        <path d="M792 90L850 100Q872 104 884 120" fill="none" stroke="#a24c22" stroke-width="6"/>
                        <path d="M800 345Q715 415 692 490L720 515Q748 520 748 560L753 552 800 500Q835 440 800 345z" fill="url(#arm)"/>
                        <path d="M748 575L770 545 806 530 800 590 818 705 800 730 770 710z" fill="#55260f"/>
                        <path d="M695 600L745 585 755 560 778 700 776 735 765 748 700 728z" fill="#85421f"/>
                        <path d="M750 560l12-8 18 140-5 50-15 10z" fill="#c4683a"/>
                        <path d="M790 545l10-6 4 60 14 100-16 26-8-10 4-40z" fill="#b85f30"/>
                        <path d="M695 715L765 750 820 720 800 765 770 780 700 740z" fill="#4a2022"/>
                        <path d="M812 668l12 14-6 14z" fill="#556"/>
                        <g stroke="#23262c" stroke-width="3">
                            <path d="M432 580q4-40 38-36 30 20 18 54-24 20-46 6z" fill="#5f666c"/><path d="M444 566l24-10 14 20-8 24-24-2z" fill="#8e969c"/><circle cx="460" cy="580" r="10" fill="#4a4f55"/>
                            <path d="M676 550q12-32 44-22 24 24 4 52-30 16-44-4z" fill="#5f666c"/><path d="M684 545l24-12 16 20-10 26-24-4z" fill="#a5acb0"/><circle cx="700" cy="556" r="11" fill="#60666c"/>
                            <path d="M706 704q12-32 44-20 22 24 4 50-30 16-46-4z" fill="#4a505e"/><path d="M712 700l24-12 18 18-10 28-26-4z" fill="#8087a0"/><circle cx="728" cy="712" r="11" fill="#50566a"/>
                        </g>
                        <g fill="none" stroke="#2a1011" stroke-width="4">
                            <path d="M178 525q20-10 36 10M186 532q10 8 24 4M196 528l8 8"/>
                            <path d="M398 640q20-10 38 10M406 648q10 8 22 4M416 642l10 8"/>
                            <path d="M620 756q20-10 38 8M628 764q10 8 20 2M638 758l8 8"/>
                        </g>
                        <path d="M432 536L550 490 606 530 586 590 467 635 410 597zM432 536L488 572 606 530M488 572L467 635M550 490L528 552 410 597M528 552L586 590" fill="none" stroke="#ff8a1c" stroke-width="3"/>
                    </svg>
                </section>
            </div>

            <section class="study">
                <div class="study-bar">
                    <label class="combo"><select aria-label="算例类型"><option>动画</option></select></label>
                    <i class="sep"></i>
                    <button aria-label="计算"><svg class="icon"><use href="#calc"/></svg></button>
                    <button aria-label="从头播放"><svg class="icon"><use href="#playstart"/></svg></button>
                    <button aria-label="播放"><svg class="icon"><use href="#play"/></svg></button>
                    <button aria-label="停止"><svg class="icon"><use href="#stop"/></svg></button>
                    <input type="range" class="slider" value="0" aria-label="时间">
                    <label class="speedbox"><input type="text" value="1x" aria-label="播放速度"></label>
                    <button aria-label="播放模式"><svg class="icon"><use href="#loop"/></svg></button><button class="drop off" aria-label="更多"><svg><use href="#caret"/></svg></button>
                    <button aria-label="保存动画"><svg class="icon"><use href="#savefilm"/></svg></button>
                    <i class="sep"></i>
                    <button aria-label="动画向导"><svg class="icon"><use href="#wizard"/></svg></button>
                    <i class="sep"></i>
                    <button aria-label="自动键码"><svg class="icon"><use href="#autokey"/></svg></button>
                    <button aria-label="添加键码"><svg class="icon"><use href="#addkey"/></svg></button>
                    <i class="sep"></i>
                    <button aria-label="马达"><svg class="icon"><use href="#motor"/></svg></button>
                    <button aria-label="弹簧"><svg class="icon"><use href="#coil"/></svg></button>
                    <button aria-label="阻尼"><svg class="icon"><use href="#damper"/></svg></button>
                    <button aria-label="力"><svg class="icon"><use href="#force"/></svg></button>
                    <button aria-label="接触"><svg class="icon"><use href="#touch"/></svg></button>
                    <button aria-label="引力"><svg class="icon"><use href="#apple"/></svg></button>
                    <i class="sep"></i>
                    <button aria-label="结果和图解"><svg class="icon"><use href="#plot"/></svg></button>
                    <i class="sep"></i>
                    <button aria-label="属性"><svg class="icon"><use href="#options"/></svg></button>
                    <i class="sep"></i>
                </div>
                <div class="study-body">
                    <div class="study-tree">
                        <div class="filters">
                            <button class="on" aria-label="无过滤"><svg class="icon"><use href="#f-plain"/></svg></button>
                            <button aria-label="过滤动画"><svg class="icon"><use href="#f-anim"/></svg></button>
                            <button aria-label="过滤驱动"><svg class="icon"><use href="#f-drive"/></svg></button>
                            <button aria-label="过滤选定"><svg class="icon"><use href="#f-sel"/></svg></button>
                            <button aria-label="过滤结果"><svg class="icon"><use href="#f-res"/></svg></button>
                        </div>
                        <ul class="tree">
                            <li class="root"><svg class="twig"><use href="#twig-minus"/></svg><svg class="icon"><use href="#asm"/></svg><span>plunger&nbsp; (Default&lt;Default_Displa</span></li>
                            <li><svg class="twig"><use href="#twig"/></svg><svg class="icon"><use href="#nocamera"/></svg><span>视向及相机视图</span></li>
                            <li><svg class="twig"><use href="#twig-plus"/></svg><svg class="icon"><use href="#lights"/></svg><span>Lights, Cameras and Scene</span></li>
                            <li class="part"><svg class="twig"><use href="#twig-plus"/></svg><svg class="icon"><use href="#part"/></svg><span>(固定) base_plunger&lt;1&gt; (Def</span></li>
                            <li class="part"><svg class="twig"><use href="#twig-plus"/></svg><svg class="icon"><use href="#part"/></svg><span>(-) short bolt_plunger&lt;1&gt; (D</span></li>
                            <li class="part"><svg class="twig"><use href="#twig-plus"/></svg><svg class="icon"><use href="#part"/></svg><span>(-) nut_plunger&lt;1&gt; (Default&lt;</span></li>
                            <li class="part"><svg class="twig"><use href="#twig-plus"/></svg><svg class="icon"><use href="#part"/></svg><span>(-) long bolt_plunger&lt;1&gt; (De</span></li>
                            <li class="part"><svg class="twig"><use href="#twig-plus"/></svg><svg class="icon"><use href="#part"/></svg><span>(-) nut_plunger&lt;2&gt; (Default&lt;</span></li>
                            <li class="part selected"><svg class="twig"><use href="#twig-plus"/></svg><svg class="icon"><use href="#part"/></svg><span>(-) long bolt_plunger&lt;2&gt; (De</span></li>
                            <li class="part"><svg class="twig"><use href="#twig-plus"/></svg><svg class="icon"><use href="#part"/></svg><span>(-) nut_plunger&lt;3&gt; (Default&lt;</span></li>
                            <li class="part"><svg class="twig"><use href="#twig-plus"/></svg><svg class="icon"><use href="#part"/></svg><span>(-) plunger&lt;1&gt; (Default&lt;&lt;De</span></li>
                            <li class="part"><svg class="twig"><use href="#twig-plus"/></svg><svg class="icon"><use href="#part"/></svg><span>(-) link_plunger&lt;1&gt; (Default&lt;</span></li>
                            <li class="part"><svg class="twig"><use href="#twig-plus"/></svg><svg class="icon"><use href="#part"/></svg><span>(-) link_plunger&lt;2&gt; (Default&lt;</span></li>
                            <li class="part"><svg class="twig"><use href="#twig-plus"/></svg><svg class="icon"><use href="#part"/></svg><span>(-) arm left&lt;1&gt; (Default&lt;&lt;De</span></li>
                            <li class="part"><svg class="twig"><use href="#twig-plus"/></svg><svg class="icon"><use href="#part"/></svg><span>(-) arm right&lt;1&gt; -&gt; (Default&lt;</span></li>
                            <li><svg class="twig"><use href="#twig-plus"/></svg><svg class="icon"><use href="#mates"/></svg><span>Mates</span></li>
                        </ul>
                    </div>
                    <div class="splitter"></div>
                    <div class="timeline">
                        <div class="ruler">
                            <div class="seconds">
                                <div class="now">0<small>秒</small></div>
                                <div>1<small>秒</small></div>
                                <div>2<small>秒</small></div>
                                <div>3<small>秒</small></div>
                                <div>4<small>秒</small></div>
                                <div>5<small>秒</small></div>
                            </div>
                        </div>
                        <div class="lanes">
                            <div class="grid"><i></i><i></i><i></i><i></i><i></i><i></i></div>
                            <div class="keys">
                                <svg class="black"><use href="#key"/></svg>
                                <svg class="black"><use href="#key"/></svg>
                                <svg class="gray"><use href="#key"/></svg>
                                <svg><use href="#key"/></svg>
                                <svg><use href="#key"/></svg>
                                <svg><use href="#key"/></svg>
                                <svg><use href="#key"/></svg>
                                <svg><use href="#key"/></svg>
                                <svg><use href="#key"/></svg>
                                <svg><use href="#key"/></svg>
                                <svg><use href="#key"/></svg>
                                <svg><use href="#key"/></svg>
                                <svg><use href="#key"/></svg>
                                <svg><use href="#key"/></svg>
                                <svg><use href="#key"/></svg>
                                <svg class="gray"><use href="#key"/></svg>
                            </div>
                            <div class="watermark"><span>东海生活网</span><b>www.aidonghai.com</b></div>
                        </div>
                    </div>
                </div>
            </section>
        </div>
    </main>
</body>
</html>
```

FILE: styles.css
```css
* {
    box-sizing: border-box;
}

body {
    margin: 0;
    height: 100vh;
    display: flex;
    flex-direction: column;
    background: #d6dade;
    color: #111;
    font: 12px/18px "Open Sans", "Noto Sans CJK SC", sans-serif;
    overflow: hidden;
}

.sprite {
    position: absolute;
    width: 0;
    height: 0;
}

button {
    width: 23px;
    height: 23px;
    flex: none;
    display: flex;
    align-items: center;
    justify-content: center;
    padding: 0;
    border: 0;
    background: none;
    color: inherit;
    font: inherit;
}

.icon {
    width: 16px;
    height: 16px;
    flex: none;
}

.drop {
    width: 18px;
}

.drop svg, .caret {
    width: 5px;
    height: 3px;
}

.latin {
    font-size: 11px;
}

.off .icon {
    opacity: 0.5;
}

.off.drop {
    opacity: 0.5;
}

.pressed {
    background: #b0b3b7;
    border: 1px solid #555;
}

.sep {
    width: 8px;
    height: 19px;
    flex: none;
    border-left: 1px solid #777b80;
    margin-left: 3px;
    margin-right: -3px;
}

.drop + .sep {
    margin-left: 1px;
}

/* menu bar */
.menubar {
    display: flex;
    height: 24px;
    flex: none;
    border-bottom: 1px solid #333;
    background: linear-gradient(#e0e2e5, #cfd2d6);
}

.logo {
    width: 127px;
    display: flex;
    align-items: center;
    padding-left: 4px;
    gap: 5px;
    background: #868686;
    color: #c9c9c9;
    font: 13px/20px "Liberation Sans", sans-serif;
}

.logo svg {
    width: 22px;
    height: 20px;
}

.menus {
    width: 537px;
    display: flex;
    align-items: center;
    justify-content: space-between;
    padding: 0 5px 4px 18px;
    background: #aaacaf;
    border-right: 1px solid #8b8d90;
}

.menus a {
    color: #111;
    text-decoration: none;
}

.quick {
    display: flex;
    align-items: center;
    padding-left: 2px;
    padding-bottom: 3px;
}

.quick .drop {
    width: 13px;
}

.quick .drop.framed {
    border: 1px solid #888;
    border-left: 0;
}

/* toolbars */
.toolrow {
    display: flex;
    height: 31px;
    flex: none;
    border-bottom: 1px solid #94979b;
    box-shadow: inset 0 1px #f4f5f6;
}

.blank {
    width: 156px;
    border-right: 1px solid #94979b;
}

.toolbar {
    display: flex;
    align-items: center;
    padding: 0 7px 0 5px;
    border-right: 1px solid #f4f5f6;
}

.toolbar.wide {
    padding: 0 6px 0 2px;
    border-right-color: #94979b;
}

.grip {
    width: 2px;
    height: 21px;
    margin-right: 6px;
    background: repeating-linear-gradient(#333 0 2px, transparent 2px 4px);
}

.grip.second {
    margin: 0 7px 0 11px;
}

/* command ribbon */
.ribbon {
    display: flex;
    align-items: flex-start;
    height: 77px;
    flex: none;
    padding-top: 2px;
    border-bottom: 2px solid #333;
}

.cmd {
    flex-direction: column;
    justify-content: flex-start;
    width: 46px;
    height: 68px;
    padding: 11px 4px 0;
    line-height: 13px;
    text-align: center;
}

.cmd.menu {
    padding-top: 5px;
}

.cmd .caret {
    margin-top: 13px;
    flex: none;
}

.cmd.narrow {
    width: 34px;
    padding-left: 0;
    padding-right: 0;
}

.cmd.broad {
    width: 60px;
    padding-top: 9px;
    border: 2px solid #66696d;
}

.cmd.speed {
    width: 60px;
    margin-left: 4px;
}

.cmd.off {
    color: #85898d;
}

.rule {
    width: 3px;
    height: 66px;
    flex: none;
    border-left: 1px solid #53575b;
}

/* tabs under the ribbon */
.tabrow {
    display: flex;
    justify-content: space-between;
    align-items: flex-start;
    height: 19px;
    flex: none;
    background: #fff;
    position: relative;
    z-index: 1;
}

.tabs {
    display: flex;
}

.tabs a {
    width: 56px;
    height: 19px;
    line-height: 16px;
    text-align: center;
    color: #111;
    text-decoration: none;
    background: #a9acb0;
    border: solid #222;
    border-width: 0 1px 2px;
}

.tabs a.active {
    width: 51px;
    background: #d6dade;
    border: 0;
}

.tabs a.long {
    width: 76px;
}

.viewbar {
    display: flex;
    padding: 1px 2px 0 0;
}

.viewbar .drop {
    width: 14px;
}

/* work area */
.work {
    display: flex;
    flex: 1;
    min-height: 0;
}

.gutter {
    width: 24px;
    flex: none;
}

.gutter-tools {
    height: 70px;
    padding: 18px 2px 0;
    border-bottom: 1px solid #94979b;
    background: repeating-linear-gradient(90deg, #444 0 2px, transparent 2px 4px) 0 8px / 22px 2px no-repeat;
}

.gutter-tools svg {
    display: block;
    width: 18px;
    height: 18px;
    margin-bottom: 7px;
}

.right {
    flex: 1;
    min-width: 0;
    display: flex;
    flex-direction: column;
}

.upper {
    display: flex;
    height: 385px;
    flex: none;
}

.panel {
    width: 202px;
    flex: none;
    display: flex;
    flex-direction: column;
    border-right: 2px solid #222;
    background: #e1e5ea;
}

.panel-tabs {
    display: flex;
    height: 26px;
    padding-top: 5px;
    background: #d6dade;
    border-bottom: 1px solid #333;
}

.panel-tabs button {
    width: 28px;
    height: 20px;
    border: 1px solid #333;
    border-left-width: 0;
    background: #b0b3b7;
}

.panel-tabs .active {
    height: 21px;
    background: #eceef1;
}

.more {
    margin-left: auto;
    padding-right: 4px;
    font-size: 18px;
    line-height: 16px;
}

.filter {
    display: flex;
    align-items: center;
    gap: 2px;
    height: 18px;
    margin: 1px 1px 4px;
    padding-left: 5px;
    border: 1px solid #444;
    background: #eceef0;
}

.filter .icon {
    height: 14px;
}

.filter .caret {
    width: 7px;
    height: 4px;
}

.tree-area {
    display: flex;
    flex: 1;
    min-height: 0;
}

.tree {
    flex: 1;
    min-width: 0;
    margin: 0;
    padding: 0;
    overflow: hidden;
    list-style: none;
    background: #e1e5ea;
}

.tree li {
    display: flex;
    align-items: center;
    height: 18px;
    padding-left: 2px;
    overflow: hidden;
    white-space: nowrap;
}

.tree li.part {
    font-size: 13px;
}

.tree .icon {
    margin-left: 1px;
}

.tree span {
    margin-left: 3px;
    padding-left: 2px;
}

.twig {
    width: 18px;
    height: 18px;
    flex: none;
}

.vscroll {
    width: 14px;
    flex: none;
    display: flex;
    flex-direction: column;
    align-items: center;
    background: #eef0f2;
}

.vscroll i, .hscroll i, .collapse i {
    border: 3px solid transparent;
}

.vscroll .up {
    margin: 4px 0 35px;
    border-bottom-color: #333;
}

.vscroll .thumb {
    width: 13px;
    height: 223px;
    border: 1px solid #a0a4a9;
    background: repeating-linear-gradient(#666 0 1px, transparent 1px 3px) center / 6px 7px no-repeat, linear-gradient(90deg, #f8f8f9, #d2d5d8);
}

.vscroll .down {
    margin-top: auto;
    margin-bottom: 4px;
    border-top-color: #333;
}

.hscroll {
    display: flex;
    align-items: center;
    height: 17px;
    padding-right: 18px;
    background: #eef0f2;
}

.hscroll .left-arrow {
    margin: 0 8px 0 3px;
    border-right-color: #333;
}

.hscroll .right-arrow {
    margin-left: auto;
    border-left-color: #333;
}

.hscroll .thumb {
    width: 57px;
    height: 15px;
    border: 1px solid #94989d;
    border-radius: 2px;
    background: repeating-linear-gradient(90deg, #555 0 1px, transparent 1px 3px) center / 8px 7px no-repeat, linear-gradient(#f8f8f9, #d2d5d8);
}

.panel-foot {
    height: 7px;
    border: solid #7c8894;
    border-width: 2px 0 1px;
    background: #d0d6dc;
}

.viewport {
    flex: 1;
    position: relative;
    background: #fff;
    overflow: hidden;
    margin-left: -2px;
    padding-left: 2px;
    background-clip: content-box;
}

.collapse {
    position: absolute;
    left: 0;
    top: 163px;
    width: 9px;
    height: 38px;
    flex-direction: column;
    justify-content: space-around;
    border: solid #222;
    border-width: 1px 2px 1px 1px;
    background: #e6e9ec;
}

.collapse i {
    border-right-color: #333;
    margin-left: -3px;
}

.triad {
    position: absolute;
    left: 18px;
    top: 290px;
    width: 56px;
    height: 60px;
    font: 10px "Liberation Serif", serif;
}

.model {
    position: absolute;
    right: 130px;
    top: 63px;
    width: 340px;
    height: 290px;
}

/* motion study */
.study {
    flex: 1;
    min-height: 0;
    display: flex;
    flex-direction: column;
    border-left: 2px solid #a3aeb9;
}

.study-bar {
    display: flex;
    align-items: center;
    height: 24px;
    flex: none;
    padding-left: 2px;
}

.combo {
    width: 99px;
    position: relative;
}

.combo select {
    display: block;
    width: 100%;
    height: 21px;
    padding: 0 3px;
    appearance: none;
    border: 1px solid #70757a;
    border-radius: 3px;
    background: linear-gradient(#f6f6f7, #d4d6d9);
    color: #111;
    font: inherit;
}

.combo::after, .speedbox::after {
    content: "";
    position: absolute;
    right: 4px;
    top: 9px;
    border: 4px solid transparent;
    border-top-color: #111;
    border-bottom: 0;
}

.slider {
    width: 187px;
    height: 18px;
    margin: 0 7px;
    appearance: none;
    background: linear-gradient(#b4b7ba 0 1px, #fff 1px 3px) center / 100% 3px no-repeat;
}

.slider::-webkit-slider-thumb {
    appearance: none;
    width: 9px;
    height: 15px;
    border: 1px solid #777;
    border-radius: 2px 2px 5px 5px;
    background: #f4f5f6;
}

.speedbox {
    position: relative;
    width: 78px;
    height: 20px;
    padding: 2px;
    display: flex;
    align-items: center;
    background: #fff;
}

.speedbox input {
    width: 13px;
    height: 15px;
    padding: 0;
    border: 0;
    background: #3399f0;
    color: #fff;
    font: inherit;
}

.study-bar .drop {
    width: 16px;
}

.study-bar .drop svg {
    width: 8px;
    height: 4px;
}

.study-body {
    display: flex;
    flex: 1;
    min-height: 0;
}

.study-tree {
    width: 231px;
    flex: none;
    overflow: hidden;
    background: #e1e5ea;
}

.filters {
    display: flex;
    justify-content: flex-end;
    height: 26px;
    background: #cbcbcb;
}

.filters button {
    margin-top: 1px;
    height: 20px;
}

.filters .on {
    border: 1px solid #555;
    border-radius: 3px;
    background: #bfc1c3;
}

.study-tree .tree {
    padding-top: 1px;
}

.study-tree li {
    padding-left: 23px;
}

.study-tree li.root {
    padding-left: 4px;
}

.selected span {
    background: #3399f0;
    color: #fff;
    line-height: 17px;
}

.splitter {
    width: 4px;
    border: solid #4a4f5c;
    border-width: 0 1px;
    margin-left: 1px;
    background: #d0d6dc;
}

.timeline {
    flex: 1;
    min-width: 0;
    display: flex;
    flex-direction: column;
    overflow: hidden;
}

.ruler {
    height: 26px;
    flex: none;
    padding-left: 50px;
    background: #cbcbcb;
}

.seconds, .grid {
    display: flex;
    width: 820px;
    height: 100%;
}

.seconds div {
    flex: 1;
    padding-left: 1px;
    color: #555;
    font-size: 12px;
    line-height: 20px;
    border-left: 1px solid #666;
    background: linear-gradient(90deg, #666 1px, transparent 1px) -1px 100% / 10% 6px repeat-x, linear-gradient(90deg, #666 1px, transparent 1px) -1px 100% / 50% 9px repeat-x;
}

.seconds small {
    margin-left: 2px;
    font-size: 11px;
    font-weight: bold;
}

.seconds .now {
    box-shadow: inset 4px 0 #f8f46a;
}

.lanes {
    flex: 1;
    position: relative;
    padding-left: 50px;
    background: #ebebeb;
    overflow: hidden;
}

.grid i {
    flex: 1;
    border-left: 1px solid #bcbcbc;
}

.keys {
    position: absolute;
    left: 46px;
    top: 1px;
    color: #1010e0;
}

.keys svg {
    display: block;
    width: 8px;
    height: 16px;
    margin: 1px 0 2px;
}

.keys .black {
    color: #000;
}

.keys .gray {
    color: #999;
}

.watermark {
    position: absolute;
    right: -8px;
    bottom: 42px;
    width: 150px;
    color: #fff;
    font-size: 15px;
    line-height: 22px;
    transform: rotate(-28deg);
    text-shadow: 0 0 1px #bbb;
}

.watermark span, .watermark b {
    display: block;
}

.watermark span {
    padding-left: 12px;
}

.watermark b {
    font: italic bold 16px/22px "Liberation Serif", serif;
}
```
